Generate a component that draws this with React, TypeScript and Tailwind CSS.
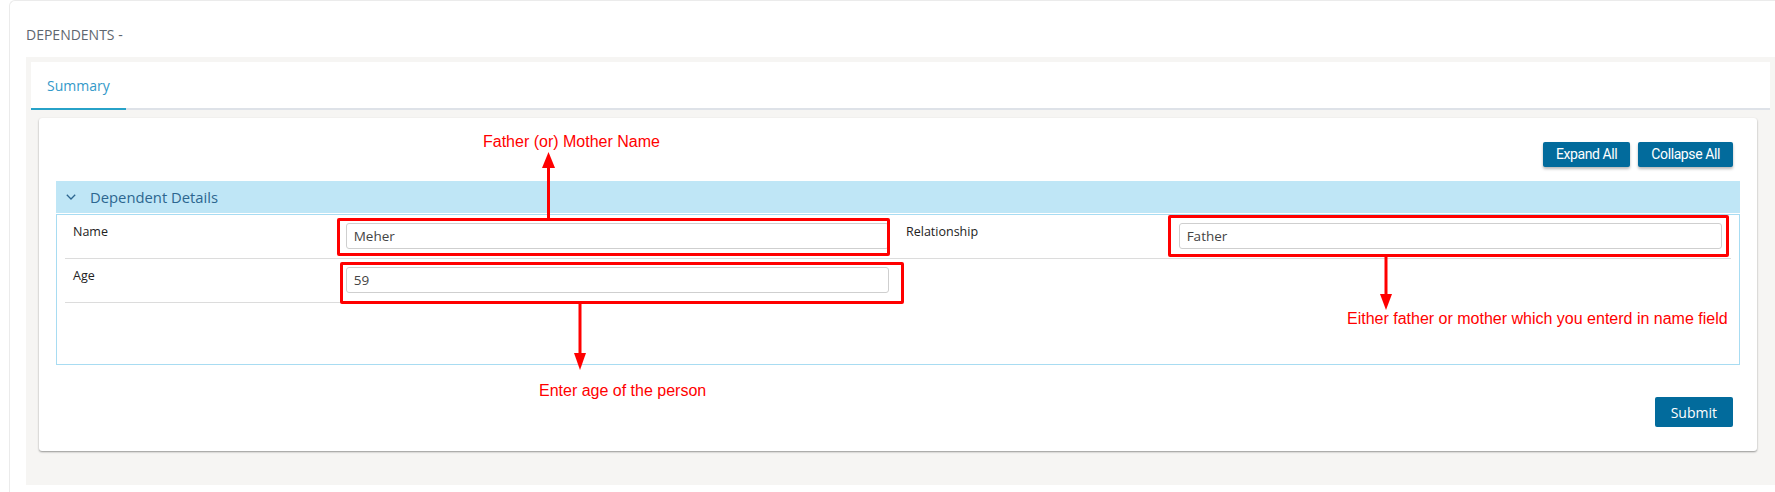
const ui = "font-['Open_Sans',sans-serif]"
const note = "font-['Liberation_Sans',Arial,sans-serif]"

function Field({ label, value }: { label: string; value: string }) {
  return (
    <div className="flex border-b border-[#dcdcdc] pt-2 pb-[9px]">
      <div className={`w-1/3 pl-2 text-[12.5px] leading-[18px] text-[#222] ${ui}`}>{label}</div>
      <div className="w-2/3 pl-[3px] pr-[9px]">
        <div
          className={`flex h-[26px] items-center rounded-[3px] border border-[#cfcfcf] bg-white px-[7px] text-[13.5px] text-[#444] ${ui}`}
        >
          {value}
        </div>
      </div>
    </div>
  )
}

function Annotations() {
  return (
    <div className="pointer-events-none absolute inset-0">
      {/* red boxes */}
      <div className="absolute left-[337px] top-[218px] h-[38px] w-[553px] rounded-[2px] border-[3px] border-[#ff0000]" />
      <div className="absolute left-[1168px] top-[215px] h-[42px] w-[561px] rounded-[2px] border-[3px] border-[#ff0000]" />
      <div className="absolute left-[340px] top-[262px] h-[42px] w-[564px] rounded-[2px] border-[3px] border-[#ff0000]" />

      {/* arrows */}
      <svg className="absolute left-0 top-0" width="1775" height="492">
        <line x1="548.5" y1="167" x2="548.5" y2="218" stroke="#ff0000" strokeWidth="3" />
        <polygon points="548.5,152 542,168 555,168" fill="#ff0000" />
        <line x1="580" y1="303" x2="580" y2="355" stroke="#ff0000" strokeWidth="3" />
        <polygon points="580,370 574,353 586,353" fill="#ff0000" />
        <line x1="1386" y1="257" x2="1386" y2="296" stroke="#ff0000" strokeWidth="3" />
        <polygon points="1386,310 1380,294 1392,294" fill="#ff0000" />
      </svg>

      {/* labels */}
      <div className={`absolute left-[483px] top-[134px] text-[16px] leading-4 text-[#ff0000] ${note}`}>
        Father (or) Mother Name
      </div>
      <div className={`absolute left-[539px] top-[383px] text-[16px] leading-4 text-[#ff0000] ${note}`}>
        Enter age of the person
      </div>
      <div className={`absolute left-[1347px] top-[311px] text-[16px] leading-4 text-[#ff0000] ${note}`}>
        Either father or mother which you enterd in name field
      </div>
    </div>
  )
}

export default function App() {
  return (
    <div className="relative h-[492px] w-[1775px] overflow-hidden bg-white">
      <div className="ml-[9px] h-full rounded-tl-[6px] border-l border-t border-[#ebebeb] pl-4 pt-6">
        <h2 className={`mb-3 text-[14px] leading-5 text-[#5f666f] ${ui}`}>DEPENDENTS -</h2>

        <div className="h-[428px] bg-[#f6f5f3] p-[5px]">
          {/* tabs */}
          <div className="flex h-12 border-b-2 border-[#dee2e8] bg-white">
            <div
              className={`-mb-[2px] flex items-center border-b-2 border-[#27a2c8] px-4 text-[14px] text-[#3399c9] ${ui}`}
            >
              Summary
            </div>
          </div>

          {/* card */}
          <div className="ml-2 mr-[13px] mt-2 rounded-[3px] bg-white px-[17px] pb-6 pt-6 shadow-[0_1px_2px_rgba(0,0,0,0.4)]">
            <div className="flex justify-end gap-2 pr-[7px]">
              <button className="h-[25px] rounded-[2px] bg-[#026b9c] px-[13px] font-['Roboto',sans-serif] text-[14px] tracking-[-0.4px] text-white shadow-[0_2px_3px_rgba(0,0,0,0.28)]">
                Expand All
              </button>
              <button className="h-[25px] rounded-[2px] bg-[#026b9c] px-[13px] font-['Roboto',sans-serif] text-[14px] tracking-[-0.4px] text-white shadow-[0_2px_3px_rgba(0,0,0,0.28)]">
                Collapse All
              </button>
            </div>

            <div className="mt-[14px]">
              <div className="flex h-8 items-center gap-[14px] bg-[#bfe6f6] pl-[10px]">
                <svg width="10" height="6" viewBox="0 0 10 6" className="text-[#2d6690]">
                  <polyline points="0.8,0.8 5,5 9.2,0.8" fill="none" stroke="currentColor" strokeWidth="1.3" />
                </svg>
                <span className={`text-[14.8px] text-[#2d6690] ${ui}`}>Dependent Details</span>
              </div>
              <div className="mt-px border border-[#a8dcf2] px-2 pb-[61px]">
                <div className="grid grid-cols-2">
                  <div>
                    <Field label="Name" value="Meher" />
                    <Field label="Age" value="59" />
                  </div>
                  <div>
                    <Field label="Relationship" value="Father" />
                  </div>
                </div>
              </div>
            </div>

            <div className="mt-8 flex justify-end pr-[7px]">
              <button className={`h-[30px] rounded-[2px] bg-[#026b9c] px-4 text-[14px] text-white ${ui}`}>Submit</button>
            </div>
          </div>
        </div>
      </div>

      <Annotations />
    </div>
  )
}
